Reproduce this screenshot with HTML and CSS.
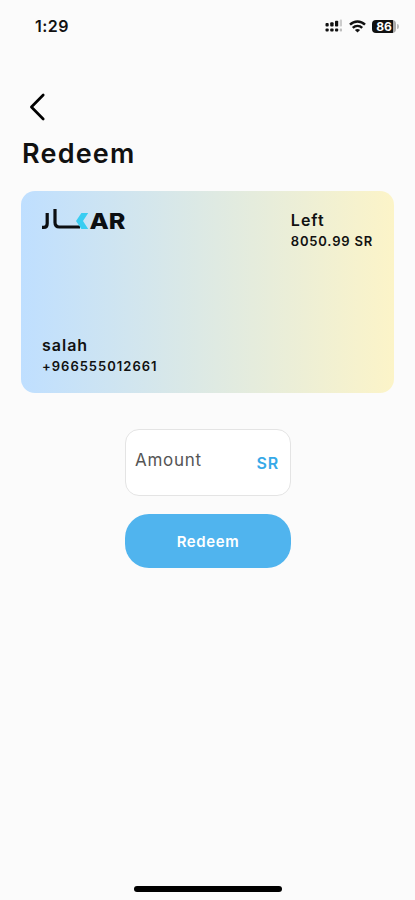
FILE: index.html
```html
<!DOCTYPE html>
<html lang="en">
<head>
    <meta charset="UTF-8">
    <meta name="viewport" content="width=device-width, initial-scale=1.0">
    <title>Redeem</title>
    <link rel="stylesheet" href="styles.css">
</head>
<body>
    <div class="screen">
        <div class="status-bar">
            <span class="time">1:29</span>
            <div class="status-icons">
                <svg class="signal" width="18" height="14" viewBox="0 0 18 14">
                    <g fill="#111">
                        <rect x="0.5" y="4" width="3.2" height="3.6" rx="1"/>
                        <rect x="5.2" y="3.2" width="3.4" height="4.4" rx="1"/>
                        <rect x="10" y="1.8" width="3.2" height="5.8" rx="0.8"/>
                        <rect x="0.5" y="9.6" width="3.2" height="3" rx="1"/>
                        <rect x="5.2" y="9.6" width="3.4" height="3" rx="1"/>
                        <rect x="10" y="9.6" width="3.2" height="3" rx="1"/>
                    </g>
                    <rect x="14.8" y="0.6" width="2.2" height="7" rx="0.8" fill="#ccc"/>
                    <rect x="14.8" y="9.6" width="2.2" height="3" rx="0.8" fill="#bbb"/>
                </svg>
                <svg class="wifi" width="17" height="13" viewBox="0 0 17 13">
                    <g fill="none" stroke="#111" stroke-width="2.4">
                        <path d="M1 4.6 C5.2 0.4 11.8 0.4 16 4.6"/>
                        <path d="M3.8 7.8 C6.4 5.2 10.6 5.2 13.2 7.8"/>
                    </g>
                    <path d="M8.5 12.6 L5.9 10 C7.4 8.7 9.6 8.7 11.1 10 Z" fill="#111"/>
                </svg>
                <div class="battery">
                    <span class="battery-level">86</span>
                    <span class="battery-tip"></span>
                </div>
            </div>
        </div>

        <div class="header">
            <svg class="back" width="18" height="28" viewBox="0 0 18 28">
                <path d="M15.2 2 L3.4 14 L15.2 26" fill="none" stroke="#000" stroke-width="2.7" stroke-linecap="round" stroke-linejoin="round"/>
            </svg>
            <h1>Redeem</h1>
        </div>

        <div class="card">
            <div class="card-row">
                <svg class="logo" width="90" height="30" viewBox="0 0 90 30">
                    <g fill="none" stroke="#0c0f12" stroke-width="3.2">
                        <path d="M5.2 4 V14.4 Q5.2 18.4 1.8 18.4 H0"/>
                        <path d="M13 0 V13.6 Q13 18 17.4 18 H38"/>
                    </g>
                    <path d="M39.4 4 H46.2 L41 12 L46.2 20 H39.4 L34 12 Z" fill="#39cdf2"/>
                    <text class="logo-text" x="47.5" y="20" textLength="36" lengthAdjust="spacingAndGlyphs">AR</text>
                </svg>
                <div class="balance">
                    <p class="label">Left</p>
                    <p class="value">8050.99 SR</p>
                </div>
            </div>
            <div class="owner">
                <p class="label">salah</p>
                <p class="value phone">+966555012661</p>
            </div>
        </div>

        <div class="form">
            <div class="amount-field">
                <span class="placeholder">Amount</span>
                <span class="currency">SR</span>
            </div>
            <button class="redeem-btn">Redeem</button>
        </div>

        <div class="home-indicator"></div>
    </div>
</body>
</html>
```
FILE: styles.css
```css
* {
    box-sizing: border-box;
}

body {
    margin: 0;
    background-color: #fbfbfb;
    color: #111;
    font-family: 'Inter', sans-serif;
}

h1, p {
    margin: 0;
}

.screen {
    display: flex;
    flex-direction: column;
    height: 900px;
    padding-bottom: 8px;
}

.status-bar {
    display: flex;
    justify-content: space-between;
    align-items: center;
    height: 52px;
    padding: 0 16px 0 35px;
}

.time {
    font-size: 16px;
    font-weight: 600;
    letter-spacing: 0.5px;
}

.status-icons {
    display: flex;
    align-items: center;
    gap: 6px;
}

.battery {
    display: flex;
    align-items: center;
    gap: 1px;
}

.battery-level {
    width: 24px;
    height: 13px;
    border-radius: 4px;
    background: linear-gradient(to right, #111 86%, #aaa 86%);
    color: white;
    font-size: 12px;
    font-weight: 700;
    line-height: 13px;
    text-align: center;
}

.battery-tip {
    width: 2px;
    height: 5px;
    border-radius: 0 2px 2px 0;
    background: #bbb;
}

.header {
    height: 139px;
    padding: 41px 22px 0;
}

.back {
    display: block;
    margin-left: 6px;
}

h1 {
    margin-top: 17px;
    font-size: 27px;
    font-weight: 600;
    line-height: 32px;
    letter-spacing: 1.2px;
}

.card {
    display: flex;
    flex-direction: column;
    justify-content: space-between;
    height: 202px;
    margin: 0 21px;
    padding: 18px 21px 17px;
    border-radius: 14px;
    background: linear-gradient(to right, #bfdfff, #fcf4c8);
}

.card-row {
    display: flex;
    justify-content: space-between;
}

.logo {
    overflow: visible;
}

.logo-text {
    font-size: 22px;
    font-weight: 800;
    fill: #0c0f12;
}

.label {
    font-size: 16px;
    font-weight: 600;
    line-height: 23px;
    letter-spacing: 1px;
}

.value {
    font-size: 13px;
    font-weight: 600;
    line-height: 19px;
    letter-spacing: 0.8px;
}

.phone {
    letter-spacing: 1px;
}

.form {
    width: 166px;
    margin: 36px auto 0 125px;
}

.amount-field {
    display: flex;
    justify-content: space-between;
    height: 67px;
    padding: 19px 11px 0 9px;
    border: 1px solid #e4e4e4;
    border-radius: 14px;
    background: white;
}

.placeholder {
    font-size: 17px;
    line-height: 22px;
    letter-spacing: 0.7px;
    color: #555;
}

.currency {
    padding-top: 4px;
    font-size: 16px;
    font-weight: 600;
    line-height: 20px;
    letter-spacing: 0.8px;
    color: #36a9e8;
}

.redeem-btn {
    display: block;
    width: 166px;
    height: 54px;
    margin-top: 18px;
    padding: 0;
    border: none;
    border-radius: 24px;
    background: #50b4ee;
    color: white;
    font-family: inherit;
    font-size: 15px;
    font-weight: 600;
    letter-spacing: 0.6px;
}

.home-indicator {
    width: 148px;
    height: 6px;
    margin: auto auto 0 134px;
    border-radius: 3px;
    background: black;
}
```
